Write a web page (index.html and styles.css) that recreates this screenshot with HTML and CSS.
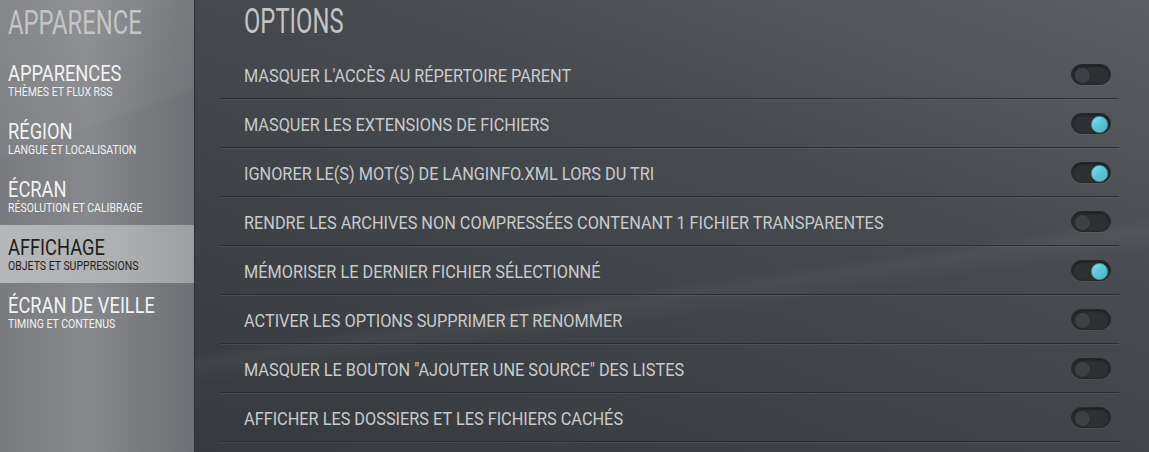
FILE: index.html
```html
<!DOCTYPE html>
<html lang="fr">
<head>
    <meta charset="UTF-8">
    <title>Apparence - Options</title>
    <link rel="stylesheet" href="styles.css">
</head>
<body>
    <div class="screen">

        <aside class="sidebar">
            <h1 class="side-title"><span class="squeeze">APPARENCE</span></h1>
            <div class="menu-item">
                <span class="item-name">APPARENCES</span>
                <span class="item-desc">THÈMES ET FLUX RSS</span>
            </div>
            <div class="menu-item">
                <span class="item-name">RÉGION</span>
                <span class="item-desc">LANGUE ET LOCALISATION</span>
            </div>
            <div class="menu-item">
                <span class="item-name">ÉCRAN</span>
                <span class="item-desc">RÉSOLUTION ET CALIBRAGE</span>
            </div>
            <div class="menu-item active">
                <span class="item-name">AFFICHAGE</span>
                <span class="item-desc">OBJETS ET SUPPRESSIONS</span>
            </div>
            <div class="menu-item">
                <span class="item-name">ÉCRAN DE VEILLE</span>
                <span class="item-desc">TIMING ET CONTENUS</span>
            </div>
        </aside>

        <main class="content">
            <h2 class="content-title"><span class="squeeze">OPTIONS</span></h2>
            <div class="option">
                <span class="label">MASQUER L'ACCÈS AU RÉPERTOIRE PARENT</span>
                <span class="toggle"></span>
            </div>
            <div class="option">
                <span class="label">MASQUER LES EXTENSIONS DE FICHIERS</span>
                <span class="toggle on"></span>
            </div>
            <div class="option">
                <span class="label">IGNORER LE(S) MOT(S) DE LANGINFO.XML LORS DU TRI</span>
                <span class="toggle on"></span>
            </div>
            <div class="option">
                <span class="label">RENDRE LES ARCHIVES NON COMPRESSÉES CONTENANT 1 FICHIER TRANSPARENTES</span>
                <span class="toggle"></span>
            </div>
            <div class="option">
                <span class="label">MÉMORISER LE DERNIER FICHIER SÉLECTIONNÉ</span>
                <span class="toggle on"></span>
            </div>
            <div class="option">
                <span class="label">ACTIVER LES OPTIONS SUPPRIMER ET RENOMMER</span>
                <span class="toggle"></span>
            </div>
            <div class="option">
                <span class="label">MASQUER LE BOUTON "AJOUTER UNE SOURCE" DES LISTES</span>
                <span class="toggle"></span>
            </div>
            <div class="option">
                <span class="label">AFFICHER LES DOSSIERS ET LES FICHIERS CACHÉS</span>
                <span class="toggle"></span>
            </div>
        </main>

    </div>
</body>
</html>
```
FILE: styles.css
```css
*{
    margin: 0;
    padding: 0;
    box-sizing: border-box;
}
body{
    width: 1149px;
    height: 452px;
    overflow: hidden;
    background: #3f4246;
    font-family: Roboto, "Liberation Sans", sans-serif;
}
.screen{
    display: flex;
    height: 452px;
}

/* the skin font is a condensed one, so squeeze Roboto */
.squeeze,
.item-name,
.item-desc,
.label{
    display: inline-block;
    white-space: nowrap;
    transform-origin: left center;
}

/* left menu */
.sidebar{
    width: 195px;
    flex-shrink: 0;
    border-right: 1px solid #2c2e32;
    background:
        linear-gradient(160deg, rgba(255,255,255,0.09) 0%, rgba(255,255,255,0.03) 30%, rgba(255,255,255,0) 31%),
        linear-gradient(90deg, #797b7e 0%, #86888b 45%, #6d7074 100%);
}
.side-title{
    height: 51px;
    padding: 2px 0 0 8px;
    font-weight: normal;
    font-size: 34px;
    line-height: 40px;
    color: #c4c5c7;
}
.side-title .squeeze{
    transform: scaleX(0.7);
}
.menu-item{
    height: 58px;
    padding: 11px 0 0 8px;
    display: flex;
    flex-direction: column;
    align-items: flex-start;
    color: #f2f2f3;
}
.item-name{
    font-size: 22px;
    line-height: 23px;
    transform: scaleX(0.83);
}
.item-desc{
    font-size: 12.5px;
    line-height: 13px;
    transform: scaleX(0.84);
}
.menu-item.active{
    color: #1d1e20;
    background: linear-gradient(90deg, #b7b8ba 0%, #aeb0b2 60%, #9c9ea1 100%);
}

/* right panel */
.content{
    flex: 1;
    padding-right: 30px;
    background:
        linear-gradient(172deg, rgba(255,255,255,0) 60%, rgba(255,255,255,0.04) 62%, rgba(255,255,255,0) 66%),
        linear-gradient(200deg, #5b5e63 0%, #46494d 40%, #36393d 100%);
}
.content-title{
    height: 50px;
    padding: 2px 0 0 49px;
    font-weight: normal;
    font-size: 35px;
    line-height: 40px;
    color: #c3c4c6;
}
.content-title .squeeze{
    transform: scaleX(0.68);
}
.option{
    height: 49px;
    margin-left: 25px;
    padding: 0 8px 0 24px;
    display: flex;
    align-items: center;
    justify-content: space-between;
    border-bottom: 1px solid #2a2c30;
    box-shadow: 0 1px 0 rgba(255,255,255,0.07);
}
.label{
    font-size: 18px;
    color: #c9cacc;
    padding-top: 3px;
    transform: scaleX(0.905);
}
.toggle{
    position: relative;
    width: 40px;
    height: 21px;
    border-radius: 11px;
    background: #2e3034;
    border: 1px solid #25272a;
    box-shadow: inset 0 1px 3px rgba(0,0,0,0.5), 0 1px 0 rgba(255,255,255,0.06);
}
.toggle:after{
    content: "";
    position: absolute;
    top: 2px;
    left: 2px;
    width: 15px;
    height: 15px;
    border-radius: 50%;
    background: #3e4044;
    border: 1px solid #26282b;
}
.toggle.on:after{
    left: auto;
    right: 2px;
    background: linear-gradient(135deg, #8fe2ec 0%, #5cc7d7 45%, #4ab6c7 100%);
    border-color: #3fa3b3;
}
```
